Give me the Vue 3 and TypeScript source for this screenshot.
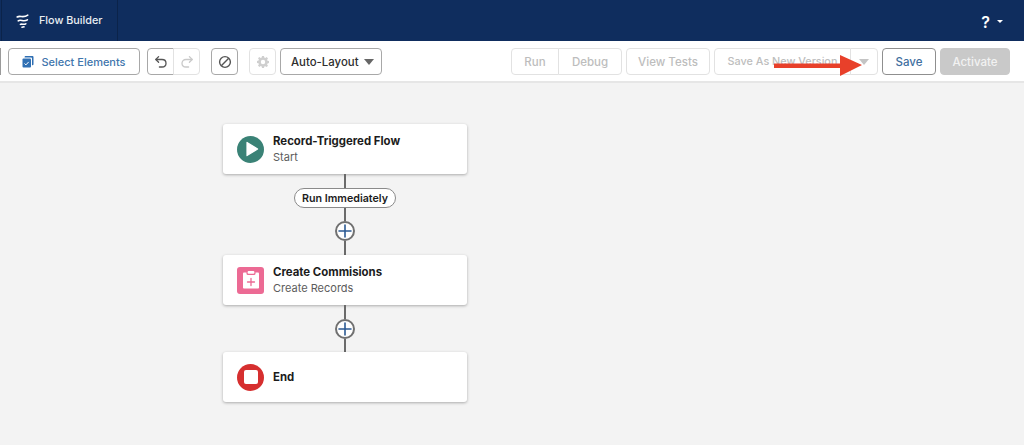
<script setup lang="ts">
interface Seg { label: string; w: number }
const runGroup: Seg[] = [
  { label: 'Run', w: 48 },
  { label: 'Debug', w: 64 },
]
</script>

<template>
  <div class="page">
    <header class="topbar">
      <div class="app-tab">
        <svg class="logo" width="14" height="14" viewBox="0 0 14 14" fill="none" stroke="#fff" stroke-width="1.6" stroke-linecap="round">
          <path d="M1.2 3 C4 1 7 4.4 11.8 1.2" />
          <path d="M2.2 6.8 C5 5 7.5 8.4 11.4 5.8" />
          <path d="M4.4 10.4 C6 9.4 7.6 11.2 9.8 9.8" />
          <path d="M6 13.2 L8 12.8" />
        </svg>
        <span>Flow Builder</span>
      </div>
      <div class="help">
        <span class="q">?</span>
        <span class="caret-w"></span>
      </div>
    </header>

    <div class="toolbar">
      <div class="stub"></div>
      <button class="btn select">
        <svg width="12" height="13" viewBox="0 0 12 13">
          <path d="M3.4 1h7.2c.5 0 .9.4.9.9v7.4c0 .5-.4.9-.9.9h-.6V3.6c0-.6-.5-1.1-1.1-1.1H2.6v-.6c0-.5.4-.9.8-.9z" fill="#2f6fb3" />
          <rect x="0.5" y="3.5" width="8.5" height="9" rx="1" fill="#2f6fb3" />
          <path d="M2.5 8.5l1.4 1.4 2.8-3" stroke="#fff" stroke-width="1" fill="none" />
        </svg>
        <span>Select Elements</span>
      </button>
      <div class="group undo">
        <button class="btn icon seg">
          <svg width="14" height="14" viewBox="0 0 14 14" fill="none" stroke="#555" stroke-width="1.3" stroke-linecap="round" stroke-linejoin="round">
            <path d="M4.6 1.6 L1.8 4.5 L4.6 7.2" />
            <path d="M2 4.5 H8 C10.6 4.5 12 6.2 12 8.2 C12 10.4 10.4 12 8 12 H5.4" />
          </svg>
        </button>
        <button class="btn icon seg off">
          <svg width="14" height="14" viewBox="0 0 14 14" fill="none" stroke="#c9c9c9" stroke-width="1.3" stroke-linecap="round" stroke-linejoin="round">
            <path d="M9.4 1.6 L12.2 4.5 L9.4 7.2" />
            <path d="M12 4.5 H6 C3.4 4.5 2 6.2 2 8.2 C2 10.4 3.6 12 6 12 H8.6" />
          </svg>
        </button>
      </div>
      <button class="btn icon square block-btn">
        <svg width="14" height="14" viewBox="0 0 14 14" fill="none" stroke="#555" stroke-width="1.4">
          <circle cx="7" cy="7" r="5.4" />
          <path d="M3.3 10.7 L10.7 3.3" />
        </svg>
      </button>
      <button class="btn icon square off gear-btn">
        <svg width="14" height="14" viewBox="0 0 14 14">
          <path fill="#cfcfcf" fill-rule="evenodd" d="M6 1h2l.3 1.6 1 .4 1.4-.9 1.3 1.4-.9 1.3.4 1 1.5.3v2l-1.5.3-.4 1 .9 1.3-1.3 1.4-1.4-.9-1 .4L8 13H6l-.3-1.6-1-.4-1.4.9L2 10.5l.9-1.3-.4-1L1 7.9v-2l1.5-.3.4-1L2 3.3l1.3-1.2 1.4.9 1-.4zM7 4.8a2.2 2.2 0 1 0 0 4.4 2.2 2.2 0 0 0 0-4.4z" />
        </svg>
      </button>
      <button class="btn layout">
        <span>Auto-Layout</span>
        <span class="caret"></span>
      </button>

      <div class="spacer"></div>

      <div class="group">
        <button v-for="s in runGroup" :key="s.label" class="btn seg off text" :style="{ width: s.w + 'px' }">{{ s.label }}</button>
      </div>
      <button class="btn off text tests">View Tests</button>
      <div class="group versions">
        <button class="btn seg off text new-version">Save As New Version</button>
        <button class="btn seg off text more"><span class="caret light"></span></button>
      </div>
      <button class="btn save">Save</button>
      <button class="btn activate">Activate</button>
    </div>

    <main class="canvas">
      <div class="flow">
        <div class="card">
          <span class="badge round teal">
            <svg width="14" height="16" viewBox="0 0 14 16"><path d="M2 1.4 L12.6 8 L2 14.6 Z" fill="#fff" stroke="#fff" stroke-linejoin="round" stroke-width="1.2" /></svg>
          </span>
          <div class="meta">
            <strong>Record-Triggered Flow</strong>
            <small>Start</small>
          </div>
        </div>
        <div class="line l14"></div>
        <div class="pill">Run Immediately</div>
        <div class="line l13"></div>
        <div class="plus">
          <svg width="14" height="14" viewBox="0 0 14 14" stroke="#2c5a93" stroke-width="1.6" stroke-linecap="round"><path d="M7 1v12M1 7h12" /></svg>
        </div>
        <div class="line l14"></div>

        <div class="card">
          <span class="badge pink">
            <svg width="18" height="20" viewBox="0 0 18 20">
              <path fill="#fff" d="M2.2 2.6h2.3v1.2c0 .7.5 1.2 1.2 1.2h6.6c.7 0 1.2-.5 1.2-1.2V2.6h2.3c.7 0 1.2.5 1.2 1.2v13.6c0 .7-.5 1.2-1.2 1.2H2.2c-.7 0-1.2-.5-1.2-1.2V3.8c0-.7.5-1.2 1.2-1.2z" />
              <rect x="5.6" y="1" width="6.8" height="2.8" rx="1" fill="#fff" />
              <path d="M9 8.5v7M5.5 12h7" stroke="#ec6a94" stroke-width="1.3" stroke-linecap="round" />
            </svg>
          </span>
          <div class="meta">
            <strong>Create Commisions</strong>
            <small>Create Records</small>
          </div>
        </div>
        <div class="line l14"></div>
        <div class="plus">
          <svg width="14" height="14" viewBox="0 0 14 14" stroke="#2c5a93" stroke-width="1.6" stroke-linecap="round"><path d="M7 1v12M1 7h12" /></svg>
        </div>
        <div class="line l13"></div>

        <div class="card">
          <span class="badge round red"><span class="stop"></span></span>
          <div class="meta"><strong>End</strong></div>
        </div>
      </div>
    </main>

    <svg class="arrow" width="90" height="24" viewBox="0 0 90 24">
      <path d="M0 9.5 H66 V1 L88 11 L66 22 V14 H0 Z" fill="#e8402a" />
    </svg>
  </div>
</template>

<style scoped>
.page {
  position: relative;
  width: 1024px;
  height: 445px;
  overflow: hidden;
  display: flex;
  flex-direction: column;
  font-family: Inter, "Liberation Sans", sans-serif;
  background: #f3f3f3;
}
.topbar {
  height: 41px;
  background: #0f2d5e;
  display: flex;
  align-items: center;
  justify-content: space-between;
  flex: none;
}
.app-tab {
  height: 41px;
  width: 117px;
  box-sizing: border-box;
  margin-left: 1px;
  padding-left: 14px;
  border-left: 1px solid #0b234a;
  border-right: 1px solid #0b234a;
  display: flex;
  align-items: center;
  gap: 9px;
  color: #e9edf3;
  font-size: 10.8px;
  font-weight: 500;
}
.help {
  display: flex;
  align-items: center;
  gap: 7px;
  margin: 2px 21px 0 0;
  color: #fff;
}
.q {
  font-size: 16px;
  font-weight: 600;
}
.caret-w {
  border-left: 3px solid transparent;
  border-right: 3px solid transparent;
  border-top: 3px solid #fff;
}
.toolbar {
  height: 42px;
  box-sizing: border-box;
  background: #fff;
  border-bottom: 2px solid #e6e6e6;
  display: flex;
  align-items: center;
  flex: none;
  padding-top: 1px;
}
.stub {
  width: 1px;
  height: 27px;
  background: #9a9a9a;
  margin-right: 7px;
}
.btn {
  height: 27px;
  box-sizing: border-box;
  padding: 0;
  background: #fff;
  border: 1px solid #a8a8a8;
  border-radius: 4px;
  font: inherit;
  font-size: 12px;
  display: flex;
  align-items: center;
  justify-content: center;
}
.select {
  width: 132px;
  gap: 7px;
  color: #3f76ad;
  font-weight: 500;
  font-size: 11px;
}
.group {
  display: flex;
}
.undo {
  margin-left: 7px;
}
.seg {
  border-radius: 0;
}
.seg + .seg {
  margin-left: -1px;
}
.group .seg:first-child {
  border-radius: 4px 0 0 4px;
}
.group .seg:last-child {
  border-radius: 0 4px 4px 0;
}
.icon,
.square {
  width: 27px;
}
.block-btn,
.gear-btn {
  margin-left: 11px;
}
.off {
  border-color: #e2e2e2;
}
.text {
  color: #bdbdbd;
  font-weight: 500;
  font-size: 11.5px;
}
.layout {
  width: 102px;
  margin-left: 4px;
  justify-content: space-between;
  padding: 0 7px 0 10px;
  color: #2e2e2e;
  font-weight: 500;
  font-size: 11.4px;
}
.caret {
  border-left: 5px solid transparent;
  border-right: 5px solid transparent;
  border-top: 6px solid #666;
}
.caret.light {
  border-top-color: #c4c4c4;
}
.spacer {
  flex: 1;
}
.tests {
  width: 84px;
  margin-left: 4px;
}
.versions {
  margin-left: 4px;
}
.new-version {
  width: 137px;
  font-size: 10.8px;
}
.more {
  width: 28px;
}
.save {
  width: 54px;
  margin-left: 4px;
  color: #3f6f9f;
  font-weight: 500;
  font-size: 11.5px;
  border-color: #8f8f8f;
}
.activate {
  width: 70px;
  margin-left: 4px;
  margin-right: 14px;
  background: #c9c9c9;
  border-color: #c9c9c9;
  color: #f2f2f2;
  font-weight: 500;
  font-size: 11.5px;
}
.canvas {
  flex: 1;
  padding: 41px 0 0 223px;
}
.flow {
  width: 244px;
  display: flex;
  flex-direction: column;
  align-items: center;
}
.card {
  width: 100%;
  height: 50px;
  box-sizing: border-box;
  background: #fff;
  border-radius: 3px;
  box-shadow: 0 1px 3px rgba(0, 0, 0, 0.3);
  display: flex;
  align-items: center;
  padding-left: 14px;
  gap: 9px;
}
.badge {
  width: 27px;
  height: 27px;
  border-radius: 3px;
  flex: none;
  display: flex;
  align-items: center;
  justify-content: center;
}
.round {
  border-radius: 50%;
}
.teal {
  background: #3a8276;
  padding-left: 3px;
  box-sizing: border-box;
}
.pink {
  background: #ec6a94;
}
.red {
  background: #d62f2f;
}
.stop {
  width: 14px;
  height: 14px;
  background: #fff;
  border-radius: 2px;
}
.meta {
  display: flex;
  flex-direction: column;
  gap: 2px;
  min-width: 0;
}
.meta strong {
  font-size: 11.4px;
  font-weight: 700;
  line-height: 14px;
  color: #1c1c1c;
}
.meta small {
  font-size: 11px;
  line-height: 14px;
  color: #5c5c5c;
}
.line {
  width: 2px;
  background: #6a6a6a;
  flex: none;
}
.l14 {
  height: 14px;
}
.l13 {
  height: 13px;
}
.pill {
  width: 102px;
  height: 20px;
  box-sizing: border-box;
  border: 1px solid #8a8a8a;
  border-radius: 10px;
  background: #fff;
  font-size: 10.7px;
  font-weight: 600;
  color: #1c1c1c;
  display: flex;
  align-items: center;
  justify-content: center;
  white-space: nowrap;
}
.plus {
  width: 20px;
  height: 20px;
  box-sizing: border-box;
  border: 2px solid #707070;
  border-radius: 50%;
  background: #fff;
  display: flex;
  align-items: center;
  justify-content: center;
}
.arrow {
  position: absolute;
  left: 774px;
  top: 54px;
}
</style>
